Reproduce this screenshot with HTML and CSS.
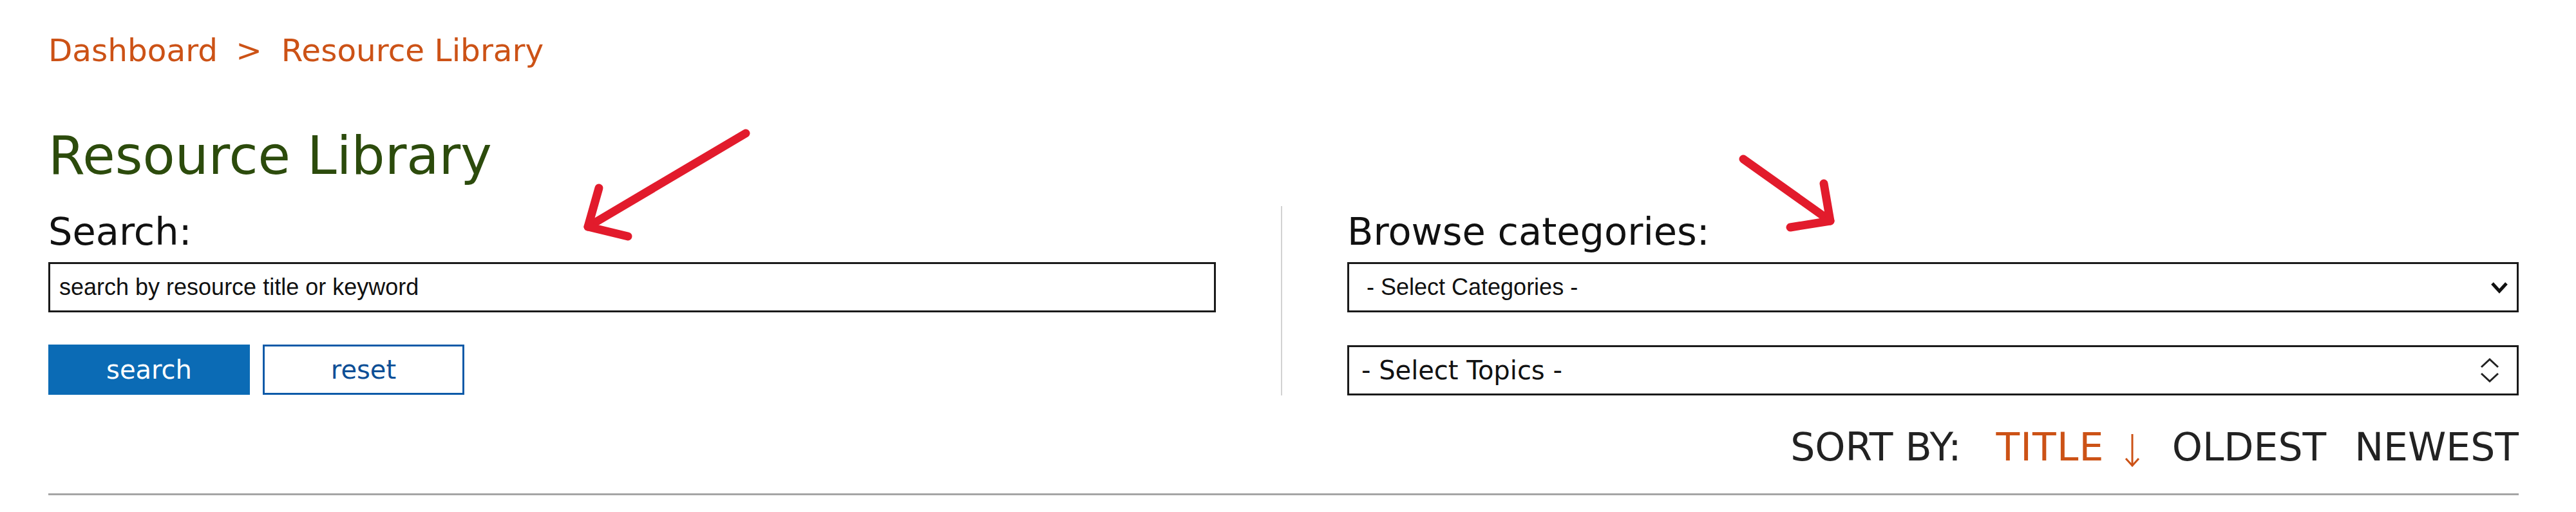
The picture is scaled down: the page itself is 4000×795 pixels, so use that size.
FILE: index.html
```html
<!DOCTYPE html>
<html lang="en">
<head>
<meta charset="utf-8">
<title>Resource Library</title>
<link rel="stylesheet" href="styles.css">
</head>
<body>
<div class="page">
  <nav class="crumbs">
    <a href="#" class="crumb">Dashboard</a>
    <span class="crumb-sep">&gt;</span>
    <a href="#" class="crumb">Resource Library</a>
  </nav>

  <h1 class="title">Resource Library</h1>

  <div class="filters">
    <section class="col">
      <label class="col-label" for="q">Search:</label>
      <input id="q" class="search-input" type="text" value="search by resource title or keyword">
      <div class="btn-row">
        <button class="btn btn-primary" type="button">search</button>
        <button class="btn btn-outline" type="button">reset</button>
      </div>
    </section>

    <div class="divider"></div>

    <section class="col">
      <div class="col-label">Browse categories:</div>
      <div class="select select-cat">
        <span class="select-text">- Select Categories -</span>
        <svg class="chev-bold" width="30" height="20" viewBox="0 0 30 20"><path d="M4 4 L15 16 L26 4" fill="none" stroke="#111" stroke-width="5" stroke-linejoin="miter"/></svg>
      </div>
      <div class="select select-topic">
        <span class="select-text">- Select Topics -</span>
        <svg class="chev-pair" width="34" height="38" viewBox="0 0 34 38"><path d="M4 14 L17 2 L30 14" fill="none" stroke="#222" stroke-width="3"/><path d="M4 24 L17 36 L30 24" fill="none" stroke="#222" stroke-width="3"/></svg>
      </div>
    </section>
  </div>

  <div class="sort">
    <span class="sort-label">SORT BY:</span>
    <a href="#" class="sort-link active">TITLE</a>
    <svg class="sort-arrow" width="26" height="54" viewBox="0 0 26 54"><path d="M13 2 L13 51" stroke="#cc5216" stroke-width="3" fill="none"/><path d="M3 40 L13 51 L23 40" stroke="#cc5216" stroke-width="3" fill="none"/></svg>
    <a href="#" class="sort-link">OLDEST</a>
    <a href="#" class="sort-link">NEWEST</a>
  </div>

  <hr class="rule">

  <svg class="annotations" width="4000" height="795" viewBox="0 0 4000 795">
    <g fill="none" stroke="#e21b2c" stroke-width="13" stroke-linecap="round" stroke-linejoin="round">
      <path d="M1158 207 L913 352"/>
      <path d="M930 292 L913 352 L975 367"/>
      <path d="M2707 247 L2842 343"/>
      <path d="M2832 285 L2842 343 L2780 353"/>
    </g>
  </svg>
</div>
</body>
</html>
```

FILE: styles.css
```css
html, body {
  margin: 0;
  padding: 0;
  background: #ffffff;
}

body {
  font-family: "DejaVu Sans", Verdana, sans-serif;
  color: #111;
}

.page {
  position: relative;
  padding: 50px 89px 0 75px;
  width: 4000px;
  height: 795px;
  box-sizing: border-box;
  overflow: hidden;
}

.crumbs {
  display: flex;
  align-items: baseline;
  font-size: 48.5px;
  line-height: 56px;
  color: #cc5216;
}

.crumb {
  color: #cc5216;
  text-decoration: none;
}

.crumb-sep {
  margin: 0 30px 0 28px;
}

.title {
  margin: 89px 0 0 0;
  font-size: 82px;
  line-height: 94px;
  font-weight: normal;
  color: #2c4b0c;
}

.filters {
  display: grid;
  grid-template-columns: 1813px 2px 1fr;
  column-gap: 101px;
  margin-top: 31px;
}

.col {
  display: flex;
  flex-direction: column;
  align-items: stretch;
}

.col-label {
  display: block;
  padding-top: 6px;
  font-size: 59px;
  line-height: 68px;
  color: #111;
  margin-bottom: 13px;
}

.divider {
  background: #d2d2d2;
}

.search-input {
  box-sizing: border-box;
  height: 78px;
  width: 100%;
  border: 3px solid #1a1a1a;
  padding: 0 14px;
  font-family: "Liberation Sans", Arial, sans-serif;
  font-size: 36px;
  color: #111;
  background: #fff;
  outline: none;
  margin: 0;
}

.btn-row {
  display: flex;
  gap: 20px;
  margin-top: 50px;
}

.btn {
  box-sizing: border-box;
  width: 313px;
  height: 78px;
  font-family: "DejaVu Sans", Verdana, sans-serif;
  font-size: 40px;
  margin: 0;
  padding: 0;
  cursor: pointer;
}

.btn-primary {
  background: #0b6bb5;
  color: #fff;
  border: 3px solid #0b6bb5;
}

.btn-outline {
  background: #fff;
  color: #0d4f96;
  border: 3px solid #0d5aa8;
}

.select {
  box-sizing: border-box;
  height: 78px;
  border: 3px solid #1a1a1a;
  display: flex;
  align-items: center;
  justify-content: space-between;
  background: #fff;
}

.select-cat {
  padding: 0 12px 0 27px;
  font-family: "Liberation Sans", Arial, sans-serif;
  font-size: 36px;
}

.select-topic {
  margin-top: 51px;
  padding: 0 25px 0 19px;
  font-size: 40px;
}

.chev-bold, .chev-pair {
  display: block;
}

.sort {
  display: flex;
  justify-content: flex-end;
  align-items: baseline;
  margin-top: 46px;
  font-size: 60px;
  line-height: 68px;
  color: #222;
}

.sort-label {
  margin-right: 54px;
}

.sort-link {
  color: #222;
  text-decoration: none;
}

.sort-link.active {
  color: #cc5216;
  letter-spacing: 1.2px;
}

.sort-arrow {
  display: block;
  align-self: center;
  margin: 10px 49px 0 30px;
}

.sort-link + .sort-link {
  margin-left: 44px;
}

.rule {
  margin: 38px 0 0 0;
  border: 0;
  height: 3px;
  background: #a5a5a5;
}

.annotations {
  position: absolute;
  left: 0;
  top: 0;
  pointer-events: none;
}
```
